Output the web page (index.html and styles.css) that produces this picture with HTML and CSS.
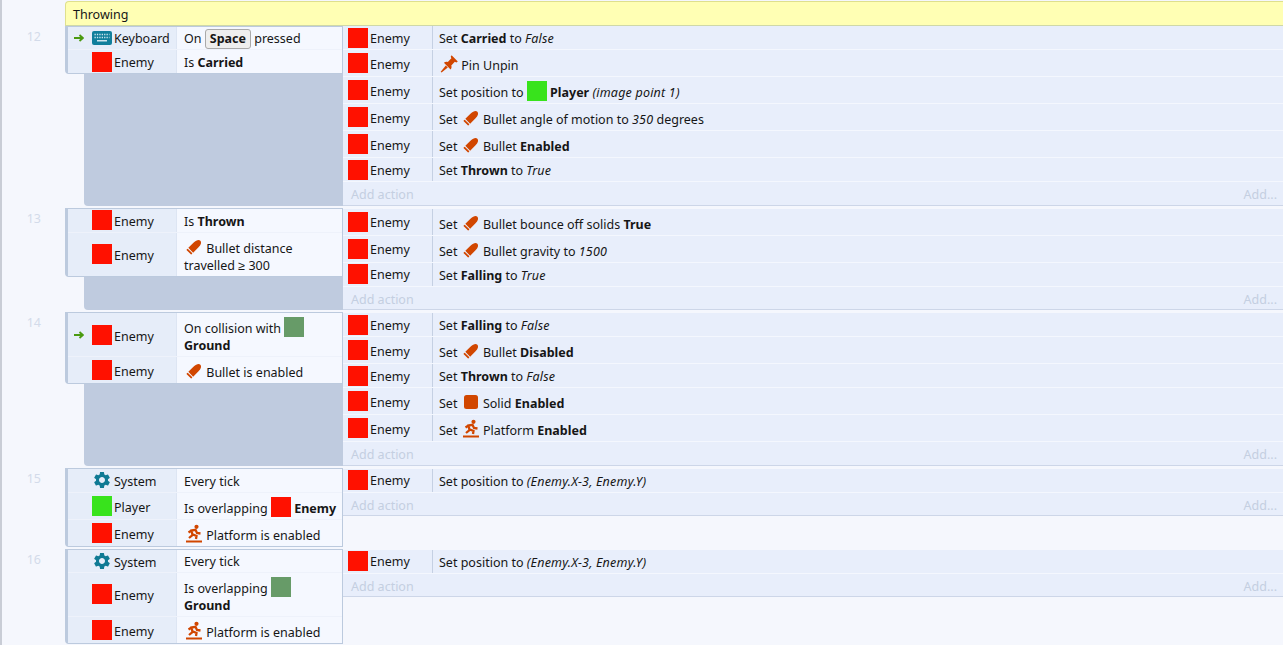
FILE: index.html
```html
<!DOCTYPE html>
<html lang="en">
<head>
<meta charset="utf-8">
<title>Event sheet</title>
<link rel="stylesheet" href="styles.css">
</head>
<body>
<svg class="sprite" xmlns="http://www.w3.org/2000/svg">
  <symbol id="bullet" viewBox="0 0 20 20">
    <g transform="rotate(45 10 10)"><path fill="#d14600" d="M6.600 7C6.600 3.500 8 1 10 1 12 1 13.400 3.500 13.400 7V14.600H6.600Z"/><rect fill="#d14600" x="6.600" y="15.600" width="6.800" height="1.800" rx=".5"/></g>
  </symbol>
  <symbol id="pin" viewBox="0 0 20 20">
    <path fill="#d14600" d="M12.600 1.200 18.800 7.400 17.400 8.400 15.800 7.800 12.300 11.500C12.900 13.200 12.400 14.500 11.600 15.400L4.900 8.700C6 7.800 7.300 7.400 8.800 7.900L12.400 4.300 11.700 2.700Z"/><path fill="#d14600" d="M6.800 11.500 8.800 13.500 2.600 18.600 1.700 17.700Z"/>
  </symbol>
  <symbol id="solid" viewBox="0 0 20 20">
    <rect fill="#d14600" x="3" y="3" width="14" height="14" rx="2.500"/>
  </symbol>
  <symbol id="platform" viewBox="0 0 20 20">
    <circle fill="#d14600" cx="12.500" cy="2.800" r="2.100"/>
    <path fill="none" stroke="#d14600" stroke-width="2.300" d="M5 14 8.500 11 7.500 6.500 11.500 5.800 13 9 16.500 9.500M7.500 6.500 4.500 8.500M9 10.500 12.500 12 12 15"/>
    <rect fill="#d14600" x="2" y="16.500" width="16" height="2"/>
  </symbol>
  <symbol id="gear" viewBox="0 0 24 24">
    <path fill="#0f7a94" d="M19.140 12.940c.04-.3.06-.61.06-.94 0-.32-.02-.64-.07-.94l2.030-1.580a.49.49 0 0 0 .12-.61l-1.920-3.320a.488.488 0 0 0-.59-.22l-2.390.96c-.5-.38-1.030-.7-1.620-.94l-.36-2.540a.484.484 0 0 0-.48-.41h-3.840c-.24 0-.43.17-.47.41l-.36 2.540c-.59.24-1.130.57-1.620.94l-2.390-.96c-.22-.08-.47 0-.59.22L2.740 8.870c-.12.21-.08.47.12.61l2.030 1.580c-.05.3-.09.63-.09.94s.02.64.07.94l-2.030 1.580a.49.49 0 0 0-.12.61l1.920 3.320c.12.22.37.29.59.22l2.390-.96c.5.38 1.030.7 1.620.94l.36 2.54c.05.24.24.41.48.41h3.840c.24 0 .44-.17.47-.41l.36-2.540c.59-.24 1.130-.56 1.620-.94l2.390.96c.22.08.47 0 .59-.22l1.920-3.320c.12-.22.07-.47-.12-.61l-2.010-1.580zM12 15.600c-1.980 0-3.600-1.620-3.600-3.600s1.620-3.600 3.600-3.600 3.600 1.620 3.600 3.600-1.620 3.600-3.600 3.600z"/>
  </symbol>
  <symbol id="keyboard" viewBox="0 0 20 20">
    <rect fill="#117f9c" x="0" y="3" width="20" height="14" rx="2"/>
    <path fill="none" stroke="#cfe6ee" stroke-width="1.300" stroke-dasharray="1.300 1.100" d="M2.500 6.500H17.500M2.500 9.500H17.500"/>
    <rect fill="#cfe6ee" x="5" y="12" width="10" height="1.500"/>
  </symbol>
  <symbol id="arrow" viewBox="0 0 10 8">
    <path fill="none" stroke="#4a9a10" stroke-width="1.800" d="M0 4H8M5.500 1 8.800 4 5.500 7"/>
  </symbol>
</svg>

<main class="sheet">
  <div class="group">Throwing</div>

  <section class="event first">
    <div class="num">12</div>
    <div class="left">
      <div class="conds">
        <div class="cond c23"><div class="obj"><span class="trig"><svg class="arrow"><use href="#arrow"/></svg></span><svg class="pic"><use href="#keyboard"/></svg><span class="name">Keyboard</span></div><div class="txt"><span>On <kbd class="key">Space</kbd> pressed</span></div></div>
        <div class="cond c23"><div class="obj"><span class="trig"></span><i class="pic red"></i><span class="name">Enemy</span></div><div class="txt"><span>Is <b>Carried</b></span></div></div>
      </div>
      <div class="sub"></div>
    </div>
    <div class="acts">
      <div class="act t"><div class="who"><i class="pic red"></i><span class="name">Enemy</span></div><div class="what"><span>Set <b>Carried</b> to <em>False</em></span></div></div>
      <div class="act i"><div class="who"><i class="pic red"></i><span class="name">Enemy</span></div><div class="what"><span><svg class="pic glyph"><use href="#pin"/></svg> Pin Unpin</span></div></div>
      <div class="act i"><div class="who"><i class="pic red"></i><span class="name">Enemy</span></div><div class="what"><span>Set position to <i class="pic green"></i> <b>Player</b> <em>(image point 1)</em></span></div></div>
      <div class="act i"><div class="who"><i class="pic red"></i><span class="name">Enemy</span></div><div class="what"><span>Set <svg class="pic glyph"><use href="#bullet"/></svg> Bullet angle of motion to <em>350</em> degrees</span></div></div>
      <div class="act i"><div class="who"><i class="pic red"></i><span class="name">Enemy</span></div><div class="what"><span>Set <svg class="pic glyph"><use href="#bullet"/></svg> Bullet <b>Enabled</b></span></div></div>
      <div class="act t"><div class="who"><i class="pic red"></i><span class="name">Enemy</span></div><div class="what"><span>Set <b>Thrown</b> to <em>True</em></span></div></div>
      <div class="add"><span>Add action</span><span>Add...</span></div>
    </div>
  </section>

  <section class="event">
    <div class="num">13</div>
    <div class="left">
      <div class="conds">
        <div class="cond c24"><div class="obj"><span class="trig"></span><i class="pic red"></i><span class="name">Enemy</span></div><div class="txt"><span>Is <b>Thrown</b></span></div></div>
        <div class="cond c43"><div class="obj"><span class="trig"></span><i class="pic red"></i><span class="name">Enemy</span></div><div class="txt"><span><svg class="pic glyph"><use href="#bullet"/></svg> Bullet distance travelled ≥ 300</span></div></div>
      </div>
      <div class="sub"></div>
    </div>
    <div class="acts">
      <div class="act i"><div class="who"><i class="pic red"></i><span class="name">Enemy</span></div><div class="what"><span>Set <svg class="pic glyph"><use href="#bullet"/></svg> Bullet bounce off solids <b>True</b></span></div></div>
      <div class="act i"><div class="who"><i class="pic red"></i><span class="name">Enemy</span></div><div class="what"><span>Set <svg class="pic glyph"><use href="#bullet"/></svg> Bullet gravity to <em>1500</em></span></div></div>
      <div class="act t"><div class="who"><i class="pic red"></i><span class="name">Enemy</span></div><div class="what"><span>Set <b>Falling</b> to <em>True</em></span></div></div>
      <div class="add"><span>Add action</span><span>Add...</span></div>
    </div>
  </section>

  <section class="event">
    <div class="num">14</div>
    <div class="left">
      <div class="conds">
        <div class="cond c44"><div class="obj"><span class="trig"><svg class="arrow"><use href="#arrow"/></svg></span><i class="pic red"></i><span class="name">Enemy</span></div><div class="txt"><span>On collision with <i class="pic ground"></i> <b>Ground</b></span></div></div>
        <div class="cond c26"><div class="obj"><span class="trig"></span><i class="pic red"></i><span class="name">Enemy</span></div><div class="txt"><span><svg class="pic glyph"><use href="#bullet"/></svg> Bullet is enabled</span></div></div>
      </div>
      <div class="sub"></div>
    </div>
    <div class="acts">
      <div class="act t"><div class="who"><i class="pic red"></i><span class="name">Enemy</span></div><div class="what"><span>Set <b>Falling</b> to <em>False</em></span></div></div>
      <div class="act i"><div class="who"><i class="pic red"></i><span class="name">Enemy</span></div><div class="what"><span>Set <svg class="pic glyph"><use href="#bullet"/></svg> Bullet <b>Disabled</b></span></div></div>
      <div class="act t"><div class="who"><i class="pic red"></i><span class="name">Enemy</span></div><div class="what"><span>Set <b>Thrown</b> to <em>False</em></span></div></div>
      <div class="act i"><div class="who"><i class="pic red"></i><span class="name">Enemy</span></div><div class="what"><span>Set <svg class="pic glyph"><use href="#solid"/></svg> Solid <b>Enabled</b></span></div></div>
      <div class="act i"><div class="who"><i class="pic red"></i><span class="name">Enemy</span></div><div class="what"><span>Set <svg class="pic glyph"><use href="#platform"/></svg> Platform <b>Enabled</b></span></div></div>
      <div class="add"><span>Add action</span><span>Add...</span></div>
    </div>
  </section>

  <section class="event">
    <div class="num">15</div>
    <div class="left">
      <div class="conds">
        <div class="cond c24"><div class="obj"><span class="trig"></span><svg class="pic"><use href="#gear"/></svg><span class="name">System</span></div><div class="txt"><span>Every tick</span></div></div>
        <div class="cond c27"><div class="obj"><span class="trig"></span><i class="pic green"></i><span class="name">Player</span></div><div class="txt"><span>Is overlapping <i class="pic red"></i> <b>Enemy</b></span></div></div>
        <div class="cond c26"><div class="obj"><span class="trig"></span><i class="pic red"></i><span class="name">Enemy</span></div><div class="txt"><span><svg class="pic glyph"><use href="#platform"/></svg> Platform is enabled</span></div></div>
      </div>
    </div>
    <div class="acts short">
      <div class="act t"><div class="who"><i class="pic red"></i><span class="name">Enemy</span></div><div class="what"><span>Set position to <em>(Enemy.X-3, Enemy.Y)</em></span></div></div>
      <div class="add"><span>Add action</span><span>Add...</span></div>
    </div>
  </section>

  <section class="event">
    <div class="num">16</div>
    <div class="left">
      <div class="conds">
        <div class="cond c23"><div class="obj"><span class="trig"></span><svg class="pic"><use href="#gear"/></svg><span class="name">System</span></div><div class="txt"><span>Every tick</span></div></div>
        <div class="cond c44"><div class="obj"><span class="trig"></span><i class="pic red"></i><span class="name">Enemy</span></div><div class="txt"><span>Is overlapping <i class="pic ground"></i> <b>Ground</b></span></div></div>
        <div class="cond c26"><div class="obj"><span class="trig"></span><i class="pic red"></i><span class="name">Enemy</span></div><div class="txt"><span><svg class="pic glyph"><use href="#platform"/></svg> Platform is enabled</span></div></div>
      </div>
    </div>
    <div class="acts short">
      <div class="act t"><div class="who"><i class="pic red"></i><span class="name">Enemy</span></div><div class="what"><span>Set position to <em>(Enemy.X-3, Enemy.Y)</em></span></div></div>
      <div class="add"><span>Add action</span><span>Add...</span></div>
    </div>
  </section>
</main>
</body>
</html>
```

FILE: styles.css
```css
* { box-sizing: border-box; }
html, body { margin: 0; height: 100%; overflow: hidden; }
body {
  background: #f5f7fd;
  color: #161616;
  font: 12.5px/17px "Noto Sans", sans-serif;
}
.sprite { display: none; }
em { letter-spacing: .2px; }
.sheet {
  height: 645px;
  padding-top: 1px;
  border-left: 2px solid #c9cdd6;
}
.group {
  height: 25px;
  margin-left: 63px;
  padding: 4px 0 0 7px;
  background: #ffffb4;
  border: 1px solid #dfe08e;
  border-bottom-color: #cfd8a8;
  border-right: 0;
  border-radius: 4px 0 0 0;
}
.event {
  display: grid;
  grid-template-columns: 63px 278px 1fr;
  margin-top: 2px;
}
.first { margin-top: 0; }
.first .acts { padding-top: 0; }
.num {
  padding: 2px 24px 0 0;
  text-align: right;
  color: #d3dbea;
}
.left { display: flex; flex-direction: column; }
.conds {
  background: #bccade;
  border: 1px solid #bccade;
  border-left-width: 3px;
  border-radius: 0 0 0 4px;
}
.sub {
  flex: 1;
  margin-left: 19px;
  background: #bfcbdf;
  border-radius: 0 0 0 4px;
}
.cond {
  display: flex;
  background: #e6edf9;
  border-bottom: 1px solid #eef2fb;
}
.cond:last-child { border-bottom: 0; }
.c23 { height: 23px; }
.c24 { height: 24px; }
.c26 { height: 26px; }
.c27 { height: 27px; }
.c43 { height: 43px; }
.c44 { height: 44px; }
.obj {
  display: flex;
  align-items: center;
  width: 109px;
  flex: none;
  border-right: 1px solid #dde5f3;
}
.trig { display: flex; width: 24px; justify-content: center; padding-right: 3px; flex: none; }
.arrow { width: 10px; height: 8px; }
.name { margin-left: 2px; padding-top: 1px; }
.i .name { padding-top: 2px; }
.cond .name { padding-top: 3px; }
.first .cond .name { padding-top: 1px; }
.txt {
  flex: 1;
  display: flex;
  align-items: center;
  padding: 2px 4px 0 7px;
  background: #f5f8ff;
}
.pic {
  display: inline-block;
  width: 20px;
  height: 20px;
  flex: none;
  vertical-align: -4px;
}
.glyph { margin-right: -1px; }
.red { background: #ff1100; }
.green { background: #38e31c; }
.ground { background: #679b68; }
.key {
  display: inline-block;
  padding: 0 4px;
  height: 20px;
  font: 700 12.5px/18px "Noto Sans", sans-serif;
  background: #eeeeee;
  border: 1px solid #a9a9a9;
  border-radius: 3px;
}
.acts {
  background: #e8eefb;
  background-clip: content-box;
  padding-top: 1px;
}
.acts .add { border-bottom: 1px solid #cdd6e8; }
.short { align-self: start; }
.act {
  display: flex;
  border-bottom: 1px solid #f4f7fe;
}
.t { height: 24px; }
.i { height: 27px; }
.who {
  display: flex;
  align-items: center;
  width: 90px;
  flex: none;
  padding-left: 5px;
  border-right: 1px solid #c5d0e3;
}
.what {
  flex: 1;
  display: flex;
  align-items: center;
  padding: 2px 0 0 6px;
  white-space: nowrap;
}
.add {
  display: flex;
  justify-content: space-between;
  height: 23.5px;
  padding: 4px 6px 0 8px;
  color: #c4cfe1;
}
```
